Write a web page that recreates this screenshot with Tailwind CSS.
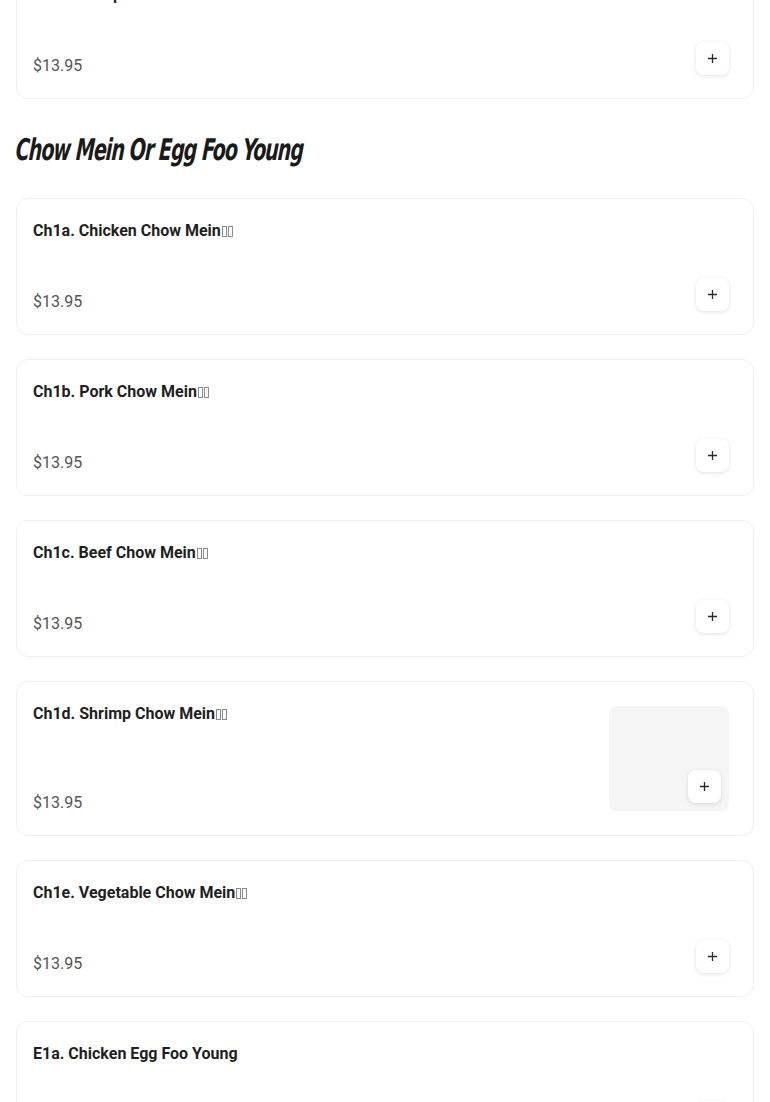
<!DOCTYPE html>
<html>
<head>
<meta charset="utf-8">
<script src="https://cdn.jsdelivr.net/npm/@tailwindcss/browser@4"></script>
</head>
<body class="bg-white overflow-hidden font-['Roboto',sans-serif]">
<main class="h-[1102px] overflow-hidden px-4">
  <div class="-mt-[38px]">
    <section class="flex justify-between rounded-xl border border-[#efefef] pl-4 pr-6 pt-5 pb-5">
      <div class="flex min-h-[95px] flex-col justify-between"><h3 class="text-base leading-6 font-bold text-[#1f1f1f]">Ch9. Shrimp Lo Mein</h3><p class="text-base leading-6 text-[#555555]">$13.95</p></div>
      <button class="mb-[3px] flex h-[33px] w-[33px] items-center justify-center self-end rounded-lg bg-white shadow-[0_1px_4px_rgba(0,0,0,0.12)]"><svg width="11" height="11" viewBox="0 0 11 11" fill="none" stroke="#2a2a2a" stroke-width="1.3"><path d="M5.5 1v9M1 5.5h9"/></svg></button>
    </section>
    <h2 class="mt-[30px] mb-[28px] h-[41px] origin-left scale-x-[0.635] -skew-x-6 font-['DejaVu_Sans',sans-serif] text-[30px] leading-[41px] font-bold tracking-[-1.5px] whitespace-nowrap text-[#1a1a1a] italic">Chow Mein Or Egg Foo Young</h2>
    <div class="flex flex-col gap-6">
      <section class="flex justify-between rounded-xl border border-[#efefef] pl-4 pr-6 pt-5 pb-5">
        <div class="flex min-h-[95px] flex-col justify-between"><h3 class="flex items-center text-base leading-6 font-bold text-[#1f1f1f]">Ch1a. Chicken Chow Mein<span class="ml-px h-[11px] w-[5px] border border-[#8a8a8a]"></span><span class="ml-px h-[11px] w-[5px] border border-[#8a8a8a]"></span></h3><p class="text-base leading-6 text-[#555555]">$13.95</p></div>
        <button class="mb-[3px] flex h-[33px] w-[33px] items-center justify-center self-end rounded-lg bg-white shadow-[0_1px_4px_rgba(0,0,0,0.12)]"><svg width="11" height="11" viewBox="0 0 11 11" fill="none" stroke="#2a2a2a" stroke-width="1.3"><path d="M5.5 1v9M1 5.5h9"/></svg></button>
      </section>
      <section class="flex justify-between rounded-xl border border-[#efefef] pl-4 pr-6 pt-5 pb-5">
        <div class="flex min-h-[95px] flex-col justify-between"><h3 class="flex items-center text-base leading-6 font-bold text-[#1f1f1f]">Ch1b. Pork Chow Mein<span class="ml-px h-[11px] w-[5px] border border-[#8a8a8a]"></span><span class="ml-px h-[11px] w-[5px] border border-[#8a8a8a]"></span></h3><p class="text-base leading-6 text-[#555555]">$13.95</p></div>
        <button class="mb-[3px] flex h-[33px] w-[33px] items-center justify-center self-end rounded-lg bg-white shadow-[0_1px_4px_rgba(0,0,0,0.12)]"><svg width="11" height="11" viewBox="0 0 11 11" fill="none" stroke="#2a2a2a" stroke-width="1.3"><path d="M5.5 1v9M1 5.5h9"/></svg></button>
      </section>
      <section class="flex justify-between rounded-xl border border-[#efefef] pl-4 pr-6 pt-5 pb-5">
        <div class="flex min-h-[95px] flex-col justify-between"><h3 class="flex items-center text-base leading-6 font-bold text-[#1f1f1f]">Ch1c. Beef Chow Mein<span class="ml-px h-[11px] w-[5px] border border-[#8a8a8a]"></span><span class="ml-px h-[11px] w-[5px] border border-[#8a8a8a]"></span></h3><p class="text-base leading-6 text-[#555555]">$13.95</p></div>
        <button class="mb-[3px] flex h-[33px] w-[33px] items-center justify-center self-end rounded-lg bg-white shadow-[0_1px_4px_rgba(0,0,0,0.12)]"><svg width="11" height="11" viewBox="0 0 11 11" fill="none" stroke="#2a2a2a" stroke-width="1.3"><path d="M5.5 1v9M1 5.5h9"/></svg></button>
      </section>
      <section class="flex justify-between rounded-xl border border-[#efefef] pl-4 pr-6 pt-5 pb-5">
        <div class="flex flex-col justify-between"><h3 class="flex items-center text-base leading-6 font-bold text-[#1f1f1f]">Ch1d. Shrimp Chow Mein<span class="ml-px h-[11px] w-[5px] border border-[#8a8a8a]"></span><span class="ml-px h-[11px] w-[5px] border border-[#8a8a8a]"></span></h3><p class="text-base leading-6 text-[#555555]">$13.95</p></div>
        <div class="relative my-1 h-[105px] w-[120px] rounded-lg bg-[#f5f5f5]">
          <button class="absolute right-2 bottom-2 flex h-[33px] w-[33px] items-center justify-center rounded-lg bg-white shadow-[0_1px_4px_rgba(0,0,0,0.12)]"><svg width="11" height="11" viewBox="0 0 11 11" fill="none" stroke="#2a2a2a" stroke-width="1.3"><path d="M5.5 1v9M1 5.5h9"/></svg></button>
        </div>
      </section>
      <section class="flex justify-between rounded-xl border border-[#efefef] pl-4 pr-6 pt-5 pb-5">
        <div class="flex min-h-[95px] flex-col justify-between"><h3 class="flex items-center text-base leading-6 font-bold text-[#1f1f1f]">Ch1e. Vegetable Chow Mein<span class="ml-px h-[11px] w-[5px] border border-[#8a8a8a]"></span><span class="ml-px h-[11px] w-[5px] border border-[#8a8a8a]"></span></h3><p class="text-base leading-6 text-[#555555]">$13.95</p></div>
        <button class="mb-[3px] flex h-[33px] w-[33px] items-center justify-center self-end rounded-lg bg-white shadow-[0_1px_4px_rgba(0,0,0,0.12)]"><svg width="11" height="11" viewBox="0 0 11 11" fill="none" stroke="#2a2a2a" stroke-width="1.3"><path d="M5.5 1v9M1 5.5h9"/></svg></button>
      </section>
      <section class="flex justify-between rounded-xl border border-[#efefef] pl-4 pr-6 pt-5 pb-5">
        <div class="flex min-h-[95px] flex-col justify-between"><h3 class="text-base leading-6 font-bold text-[#1f1f1f]">E1a. Chicken Egg Foo Young</h3><p class="text-base leading-6 text-[#555555]">$13.95</p></div>
        <button class="mb-[3px] flex h-[33px] w-[33px] items-center justify-center self-end rounded-lg bg-white shadow-[0_1px_4px_rgba(0,0,0,0.12)]"><svg width="11" height="11" viewBox="0 0 11 11" fill="none" stroke="#2a2a2a" stroke-width="1.3"><path d="M5.5 1v9M1 5.5h9"/></svg></button>
      </section>
    </div>
  </div>
</main>
</body>
</html>
